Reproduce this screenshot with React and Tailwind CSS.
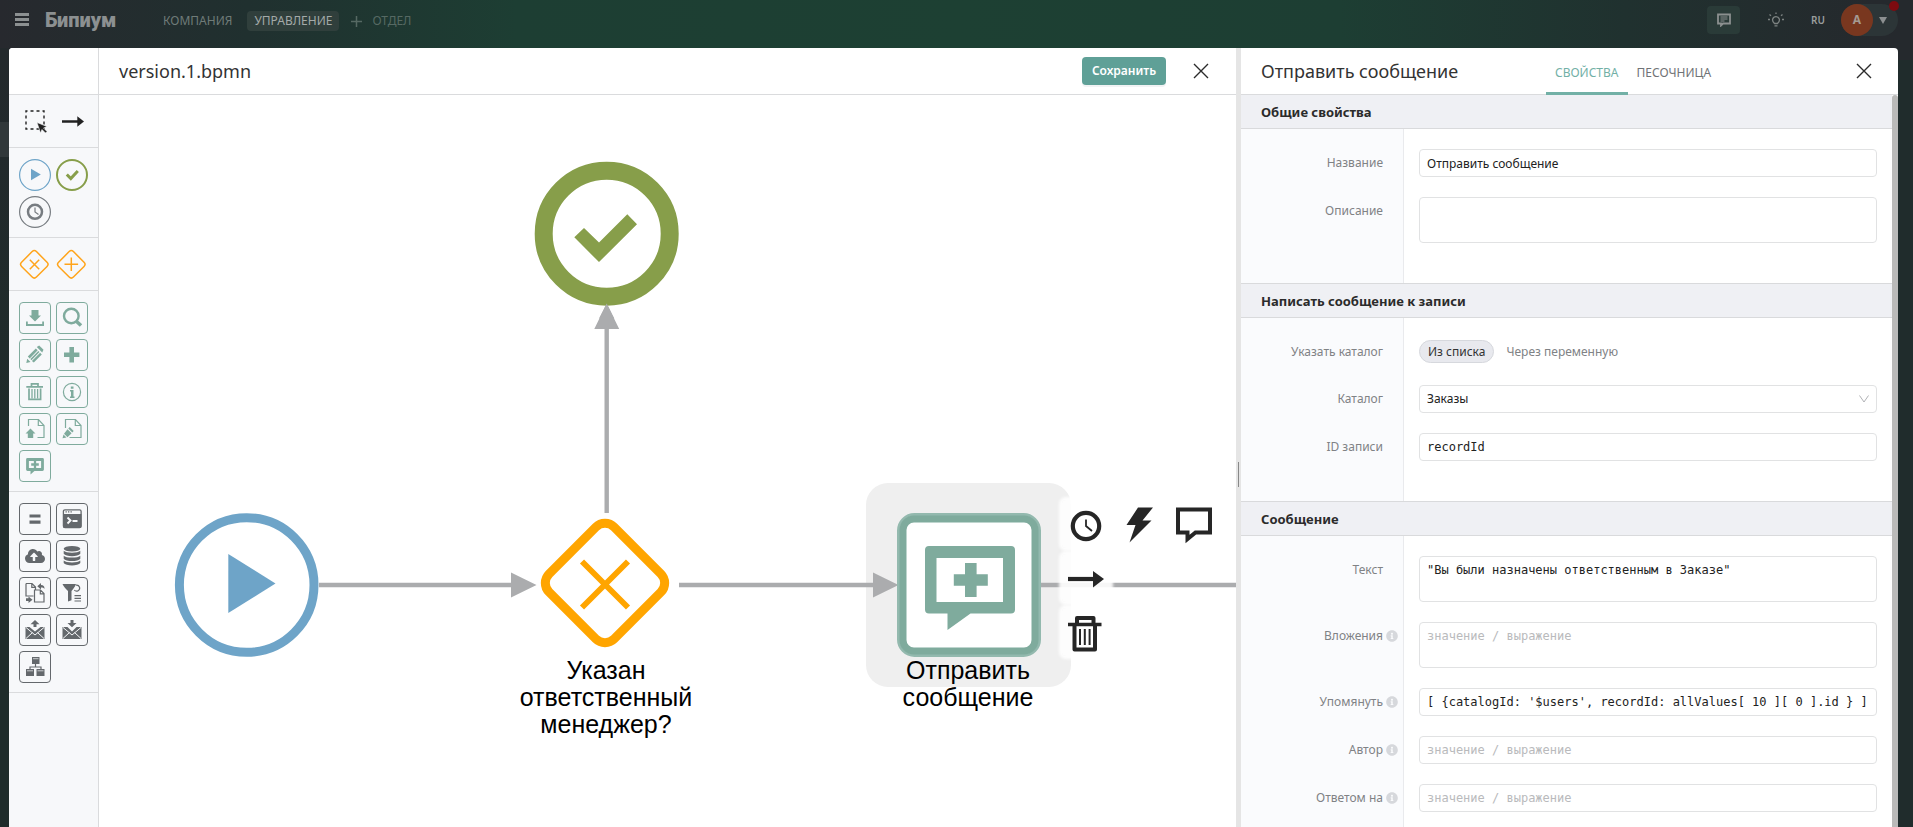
import { FaCloudUploadAlt, FaInfoCircle } from "react-icons/fa";

const Icon = ({ children }) => (
  <svg viewBox="0 0 32 32" className="size-8 shrink-0" fill="none" stroke="currentColor" aria-hidden="true">
    {children}
  </svg>
);
const Solid = ({ children }) => (
  <g fill="currentColor" stroke="none">{children}</g>
);

const icons = {
  lasso: (
    <Icon>
      <rect x="7" y="5" width="18" height="18" strokeWidth="1.4" strokeDasharray="3 3" strokeDashoffset="1.5" />
      <path d="M18 16.500 28 20.500 24.500 22 28 25.500 26.500 27 23 23.500 21.500 27Z" fill="currentColor" stroke="#f7f8fa" strokeWidth=".6" />
    </Icon>
  ),
  connect: (
    <Icon>
      <path d="M6 15.500H22" strokeWidth="2.4" />
      <Solid><path d="M21.300 10.300 28 15.500 21.300 20.700Z" /></Solid>
    </Icon>
  ),
  start: (
    <Icon>
      <circle cx="16" cy="16" r="15.400" strokeWidth="1.200" />
      <Solid><path d="M12 9.700V21.200L21.800 15.500Z" /></Solid>
    </Icon>
  ),
  end: (
    <Icon>
      <circle cx="16" cy="16" r="15" strokeWidth="2" />
      <path d="m10.800 15.500 4 4 7-7.500" strokeWidth="3" />
    </Icon>
  ),
  timer: (
    <Icon>
      <circle cx="16" cy="16" r="15.400" strokeWidth="1.200" />
      <circle cx="16" cy="15.800" r="7" strokeWidth="2.500" />
      <path d="M16 11.500V16l3.500 2.500" strokeWidth="1.200" />
    </Icon>
  ),
  gatewayX: (
    <Icon>
      <rect x="4.800" y="4.800" width="21" height="21" rx="3" strokeWidth="1.500" transform="rotate(45 15.300 15.300)" />
      <path d="m10.800 10.800 9.400 9.400m0-9.400-9.400 9.400" strokeWidth="1.500" />
    </Icon>
  ),
  gatewayPlus: (
    <Icon>
      <rect x="4.800" y="4.800" width="21" height="21" rx="3" strokeWidth="1.500" transform="rotate(45 15.300 15.300)" />
      <path d="M8.500 15.300h13.600M15.300 8.500v13.600" strokeWidth="1.500" />
    </Icon>
  ),
  download: (
    <Icon>
      <Solid>
        <path d="M12.500 8h7v5.500h2.500L16 19.500 10 13.500h2.500ZM7 19.500h1.800V22h14.400v-2.500H25V24H7Z" />
      </Solid>
    </Icon>
  ),
  search: (
    <Icon>
      <circle cx="15.300" cy="14" r="7.300" strokeWidth="2.400" />
      <path d="m20 19 5 4.500" strokeWidth="3.600" />
    </Icon>
  ),
  pencil: (
    <Icon>
      <Solid>
        <path d="m17.800 8 2.400-1.500 4.300 4.300-1.300 2.600Z" />
        <path d="m7.300 24 .900-4.200 3.300 3.300ZM8.800 17.600l8-8.200 1.900 1.900-8 8.200ZM11.300 20.100l8-8.200 1.200 1.200-8 8.200ZM12.900 22l8.200-8.200 1.700 1.700-8 8.100Z" />
      </Solid>
    </Icon>
  ),
  plus: (
    <Icon>
      <path d="M8 15.800h15.400M15.700 8.100v15.400" strokeWidth="4.600" />
    </Icon>
  ),
  trash: (
    <Icon>
      <path d="M7.300 10.800H24M12.500 10.500V7.800h6.500v2.700" strokeWidth="1.700" />
      <path d="M10 12.500V23.300h11.600V12.500" strokeWidth="1.700" />
      <path d="M13 13v9.500M15.800 13v9.500M18.600 13v9.500" strokeWidth="1.300" />
    </Icon>
  ),
  info: (
    <Icon>
      <circle cx="16" cy="16" r="8.600" strokeWidth="1.200" />
      <Solid><path d="M14.800 10.500h2.700v2.300h-2.700ZM14 14h3.500v6.500h1V22H14v-1.500h1v-5h-1Z" /></Solid>
    </Icon>
  ),
  docUp: (
    <Icon>
      <path d="M9.500 13V6.500h10l5.500 6v12H18.500M19.300 6.500V12.500H25" strokeWidth="1.200" />
      <Solid><path d="m11.500 15.500 5 5h-2.300V25H8.800v-4.500H6.500Z" /></Solid>
    </Icon>
  ),
  docEdit: (
    <Icon>
      <path d="M9.500 15V6.500h10l5.500 6v12H13.500M19.300 6.500V12.500H25" strokeWidth="1.200" />
      <Solid><path d="m13.700 14 4 4-1.400 1.500-4-4ZM11.500 16.200l4.100 4.100-4.100 3.900-3.500-3.500ZM7.500 21.500l3 3-4 .7Z" /></Solid>
    </Icon>
  ),
  comment: (
    <Icon>
      <path d="M8.500 9.500h15v10h-15Z" strokeWidth="2.800" strokeLinejoin="round" />
      <path d="M12.200 14.500h7.600M16 10.700v7.600" strokeWidth="2.300" />
      <Solid><path d="M11.500 20.500V24.500l4.500-4Z" /></Solid>
    </Icon>
  ),
  assign: (
    <Icon>
      <path d="M10.500 13h11M10.500 19.200h11" strokeWidth="3.200" />
    </Icon>
  ),
  terminal: (
    <Icon>
      <rect x="7.400" y="6.800" width="17.700" height="17.700" rx="1.500" strokeWidth="1.300" />
      <Solid><path d="M7 11h18.500v12.500a1.500 1.500 0 0 1-1.500 1.500H8.500A1.500 1.500 0 0 1 7 23.500ZM9.500 8.300h1.300v1.300H9.500ZM12 8.300h1.300v1.300H12ZM14.500 8.300h1.300v1.300h-1.300Z" /></Solid>
      <path d="m11.500 14.500 3 3-3 3M16.500 18h5" stroke="#f7f8fa" strokeWidth="1.900" />
    </Icon>
  ),
  cloud: <FaCloudUploadAlt className="size-5 shrink-0" aria-hidden="true" />,
  database: (
    <Icon>
      <Solid>
        <ellipse cx="16" cy="8.800" rx="8.300" ry="2.800" />
        <path d="M7.700 10.800c2 2.500 14.600 2.500 16.600 0v3c-2 3.100-14.600 3.100-16.600 0ZM7.700 15.700c2 2.500 14.600 2.500 16.600 0v3c-2 3.100-14.600 3.100-16.600 0ZM7.700 20.600c2 2.500 14.600 2.500 16.600 0v2.400c-2 3.300-14.600 3.300-16.600 0Z" />
      </Solid>
    </Icon>
  ),
  docCopy: (
    <Icon>
      <path d="M7 6.500h6l3.500 3.500v3M7 6.500V19h7.500M12.800 6.500V10.300h3.700M15.500 13h6l3.500 3.500v8.500h-9.500ZM21.300 13v3.800H25" strokeWidth="1.200" />
      <Solid>
        <path d="M22 6v2c2.500 0 3.500 1 3.500 4-.800-1.300-1.800-1.500-3.500-1.500v2L18.300 9.200ZM7 21.300h2.500v-1.800l4 3.200-4 3.200v-1.800H7Z" />
      </Solid>
    </Icon>
  ),
  filter: (
    <Icon>
      <Solid><path d="M6.500 7H20l-.800 2c-1.200 2-2 3-3.700 5v9.300L12 24.500V14C9.500 11.500 7.500 9.500 6.500 7Z" /></Solid>
      <path d="M20 8.200a3 3 0 1 1-1.700 4.800M18.500 18.700H25M18.500 21.300H25M18.500 24H25" strokeWidth="1.200" />
    </Icon>
  ),
  mailUp: (
    <Icon>
      <Solid><path d="m16 6 4.500 4.300h-3V13h-3v-2.700h-3ZM6.500 13h4L16 17.500 21.500 13h4v12h-19Z" /></Solid>
      <path d="m7 13.500 9 7.500 9-7.500M7 24.500l6.500-6M25 24.500l-6.500-6" stroke="#f7f8fa" strokeWidth="1" />
    </Icon>
  ),
  mailDown: (
    <Icon>
      <Solid><path d="m16 13.300 4.500-4.300h-3V6h-3v3h-3ZM6.500 13h5L16 17.500 20.500 13h5v12h-19Z" /></Solid>
      <path d="m7 13.500 9 7.500 9-7.500M7 24.500l6.500-6M25 24.500l-6.500-6" stroke="#f7f8fa" strokeWidth="1" />
    </Icon>
  ),
  sitemap: (
    <Icon>
      <path d="M16.500 13v3M11 18.500V16h11v2.500" strokeWidth="1.200" />
      <Solid><path d="M13 6h7.500v7H13ZM7 18h8v7H7ZM17.500 18h8v7h-8Z" /></Solid>
      <path d="M14 7.700h5.500M8 19.800h6M18.500 19.800h6" stroke="#f7f8fa" strokeWidth=".7" />
    </Icon>
  ),
};

const GREEN_BOX = "rounded border border-[#7fab9d] text-[#7fab9d]";
const GREY_BOX = "rounded border border-[#64686c] text-[#64686c]";

const palette = [
  [
    ["lasso", "Выделение", "text-[#222]"],
    ["connect", "Соединение", "text-[#222]"],
  ],
  [
    ["start", "Начало", "text-[#6ea4c8]"],
    ["end", "Завершение", "text-[#879e4a]"],
    ["timer", "Таймер", "text-[#777c81]"],
  ],
  [
    ["gatewayX", "Исключающий шлюз", "text-[#ffa41b]"],
    ["gatewayPlus", "Параллельный шлюз", "text-[#ffa41b]"],
  ],
  [
    ["download", "Получить запись", GREEN_BOX],
    ["search", "Найти записи", GREEN_BOX],
    ["pencil", "Изменить запись", GREEN_BOX],
    ["plus", "Создать запись", GREEN_BOX],
    ["trash", "Удалить запись", GREEN_BOX],
    ["info", "Информация", GREEN_BOX],
    ["docUp", "Загрузить файл", GREEN_BOX],
    ["docEdit", "Заполнить файл", GREEN_BOX],
    ["comment", "Написать сообщение", GREEN_BOX],
  ],
  [
    ["assign", "Присвоить", GREY_BOX],
    ["terminal", "Код", GREY_BOX],
    ["cloud", "Запрос", GREY_BOX],
    ["database", "База данных", GREY_BOX],
    ["docCopy", "Преобразовать файл", GREY_BOX],
    ["filter", "Фильтр", GREY_BOX],
    ["mailUp", "Отправить письмо", GREY_BOX],
    ["mailDown", "Получить письмо", GREY_BOX],
    ["sitemap", "Подпроцесс", GREY_BOX],
  ],
];

function Palette() {
  return (
    <aside className="flex w-[90px] shrink-0 flex-col border-r border-[#dadbdd] bg-[#f7f8fa]">
      <div className="h-[47px] shrink-0 border-b border-[#dadbdd] bg-white" />
      {palette.map((group, i) => (
        <div key={i} className="grid shrink-0 grid-cols-[32px_32px] gap-[5px] border-b border-[#dadbdd] pt-[11px] pb-[9px] pl-[10px]">
          {group.map(([icon, label, tone]) => (
            <button key={icon} type="button" aria-label={label} className={`flex size-8 items-center justify-center ${tone}`}>
              {icons[icon]}
            </button>
          ))}
        </div>
      ))}
    </aside>
  );
}

const CloseIcon = () => (
  <svg viewBox="0 0 16 16" className="size-4" stroke="#2b2b2b" strokeWidth="1.400" aria-hidden="true">
    <path d="m1 1 14 14M15 1 1 15" />
  </svg>
);

const padButtons = [
  {
    label: "Таймер",
    place: "left-[963px] top-[405px]",
    art: (
      <>
        <circle cx="24" cy="26" r="13.200" fill="none" stroke="#262626" strokeWidth="4.200" />
        <path d="M24 19.500v6.500l6 5" fill="none" stroke="#262626" strokeWidth="1.800" />
      </>
    ),
  },
  {
    label: "Событие",
    place: "left-[1016px] top-[405px]",
    art: <path d="M23 7.500h15L27.500 20.500h9L14.500 42.500 20.500 25H11.500Z" fill="#262626" />,
  },
  {
    label: "Комментарий",
    place: "left-[1069px] top-[405px]",
    art: <path d="M10 9.500h32v23H27.500l-8 6.500v-6.500H10Z" fill="none" stroke="#262626" strokeWidth="4" />,
  },
  {
    label: "Соединить",
    place: "left-[963px] top-[459px]",
    art: (
      <>
        <path d="M6 25h26" stroke="#262626" strokeWidth="4.200" />
        <path d="M31 17l11 8-11 8.500Z" fill="#262626" />
      </>
    ),
  },
  {
    label: "Удалить",
    place: "left-[963px] top-[513px]",
    art: (
      <>
        <path d="M15 15.500V10h16.500v5.500" fill="none" stroke="#262626" strokeWidth="4" strokeLinejoin="round" />
        <path d="M6 16.500h33.500" stroke="#262626" strokeWidth="3.600" />
        <path d="M12.500 17v24.500H33V17" fill="none" stroke="#262626" strokeWidth="4" strokeLinejoin="round" />
        <path d="M18 21v16M22.800 21v16M27.600 21v16" stroke="#262626" strokeWidth="2" />
      </>
    ),
  },
];

function Diagram() {
  return (
    <div className="relative min-h-0 flex-1 overflow-hidden">
      <svg className="absolute inset-0 size-full" role="img" aria-label="Схема процесса">
        <g transform="translate(-99 -95)">
          <rect x="866" y="483" width="205" height="204" rx="22" fill="#efefef" />
          <g stroke="#abacae" strokeWidth="4.400">
            <path d="M319 585H512M606.700 513V328M679 585H874M1041 585H1500" />
          </g>
          <g fill="#abacae">
            <path d="M511 572.500 536.500 585 511 597.500ZM594.300 329 606.700 303.500 619.200 329ZM873 572.500 898.500 585 873 597.500Z" />
          </g>

          <circle cx="246.700" cy="585" r="67.300" fill="#fff" stroke="#6ea4c8" strokeWidth="9" />
          <path d="M228.300 554V613L275.500 583.500Z" fill="#6ea4c8" />

          <circle cx="606.700" cy="233.700" r="63" fill="#fff" stroke="#879e4a" strokeWidth="18" />
          <path d="M574.300 237.300 584 228 599 242.600 627.300 214.300 637 224.200 599 262.100Z" fill="#879e4a" />
          <path d="M599 318.500 606.700 303.500 614.300 318.500Z" fill="#abacae" />

          <rect x="559" y="537" width="92" height="92" rx="13" fill="#fff" stroke="#ffa500" strokeWidth="9" transform="rotate(45 605 583)" />
          <path d="m582 561.500 46 46m0-46-46 46" stroke="#ffa500" strokeWidth="5.800" />

          <rect x="898.500" y="514.500" width="141" height="141" rx="16" fill="#fff" stroke="#93b9ae" strokeWidth="3" />
          <rect x="903" y="519" width="132" height="132" rx="11" fill="#fff" stroke="#7fab9d" strokeWidth="7" />
          <path d="M929 546h82a4 4 0 0 1 4 4v59.500a4 4 0 0 1-4 4H970.500L947.500 630V613.500H929a4 4 0 0 1-4-4V550a4 4 0 0 1 4-4Z" fill="#7fab9d" />
          <path d="M936.500 558h66.500v44h-66.500Z" fill="#fff" />
          <path d="M965 563h11.600v11.300h11.200v11.500h-11.200V597H965v-11.200h-11.200v-11.500H965Z" fill="#7fab9d" />
        </g>
      </svg>
      <p className="absolute top-[562px] left-[407px] w-[200px] text-center font-['Liberation_Sans',Arial,sans-serif] text-[25px] leading-[27px] text-black">
        Указан ответственный менеджер?
      </p>
      <p className="absolute top-[562px] left-[789px] w-[160px] text-center font-['Liberation_Sans',Arial,sans-serif] text-[25px] leading-[27px] text-black">
        Отправить сообщение
      </p>
      {padButtons.map(({ label, place, art }) => (
        <button key={label} type="button" aria-label={label} className={`absolute ${place} size-12 rounded bg-white/90 shadow-[0_0_3px_3px_rgba(255,255,255,0.9)]`}>
          <svg viewBox="0 0 48 48" className="size-12 overflow-visible" aria-hidden="true">{art}</svg>
        </button>
      ))}
    </div>
  );
}

function Row({ label, htmlFor, hint, children }) {
  return (
    <div className="group flex">
      <div className="w-[163px] shrink-0 border-r border-[#e9eaed] bg-[#fafbfd] pb-5 group-first:pt-5 group-last:pb-10">
        <div className="flex h-[27px] items-center justify-end gap-[3px] pr-[5px] text-[12px] text-[#808285]">
          <label htmlFor={htmlFor}>{label}</label>
          <span className="flex w-3 justify-center text-[#d6d8dc]">
            {hint && <FaInfoCircle className="size-3" aria-hidden="true" />}
          </span>
        </div>
      </div>
      <div className="min-w-0 flex-1 pr-[15px] pb-5 pl-[15px] group-first:pt-5 group-last:pb-10">{children}</div>
    </div>
  );
}

const FIELD = "block w-full rounded border border-[#e1e2e3] bg-white px-[7px] text-[12px] text-[#222] outline-none placeholder:text-[#b9babc]";
const CODE = "font-['DejaVu_Sans_Mono',monospace]";

function Section({ title, first, children }) {
  return (
    <section>
      <h3 className={`flex items-center border-b border-[#d9dadc] bg-[#eff0f4] pt-0.5 pl-5 text-[13px] font-bold text-[#2b2b2b] ${first ? "h-[34px]" : "h-[35px] border-t"}`}>
        {title}
      </h3>
      <div>{children}</div>
    </section>
  );
}

function Properties() {
  return (
    <aside className="flex w-[657px] shrink-0 flex-col">
      <header className="flex h-[47px] shrink-0 items-stretch border-b border-[#dadbdd] pl-5">
        <h2 className="flex w-[285px] items-center text-[18px] text-[#333]">Отправить сообщение</h2>
        <nav className="-mb-px flex text-[12px]">
          <button type="button" className="border-b-[3px] border-[#72b0a6] px-[9px] pt-[6px] text-[#72b0a6]">СВОЙСТВА</button>
          <button type="button" className="border-b-[3px] border-transparent px-[9px] pt-[6px] text-[#707376]">ПЕСОЧНИЦА</button>
        </nav>
        <button type="button" aria-label="Закрыть" className="mr-[26px] ml-auto self-center">
          <CloseIcon />
        </button>
      </header>
      <div className="flex min-h-0 flex-1">
        <form className="min-w-0 flex-1 overflow-hidden">
          <Section title="Общие свойства" first>
            <Row label="Название" htmlFor="name">
              <input id="name" defaultValue="Отправить сообщение" className={`${FIELD} h-7`} />
            </Row>
            <Row label="Описание" htmlFor="about">
              <textarea id="about" className={`${FIELD} h-[46px] resize-none`} />
            </Row>
          </Section>
          <Section title="Написать сообщение к записи">
            <Row label="Указать каталог" htmlFor="from-list">
              <div className="flex h-[27px] items-center gap-3 text-[12px]">
                <label className="flex h-[23px] cursor-pointer items-center rounded-full border border-[#d6d8dd] bg-[#e8e9ee] px-2 text-[#333]">
                  <input id="from-list" type="radio" name="catalog-source" defaultChecked className="sr-only" />
                  Из списка
                </label>
                <label className="cursor-pointer text-[#808285]">
                  <input type="radio" name="catalog-source" className="sr-only" />
                  Через переменную
                </label>
              </div>
            </Row>
            <Row label="Каталог" htmlFor="catalog">
              <div className="relative">
                <select id="catalog" className={`${FIELD} h-7 appearance-none`}>
                  <option>Заказы</option>
                </select>
                <svg viewBox="0 0 12 8" className="pointer-events-none absolute top-[10px] right-[7px] h-2 w-3" fill="none" stroke="#b0b2b5" aria-hidden="true">
                  <path d="m1.500.5 4.500 6.500L10.500.5" />
                </svg>
              </div>
            </Row>
            <Row label="ID записи" htmlFor="record">
              <input id="record" defaultValue="recordId" className={`${FIELD} ${CODE} h-7`} />
            </Row>
          </Section>
          <Section title="Сообщение">
            <Row label="Текст" htmlFor="text">
              <textarea id="text" defaultValue={'"Вы были назначены ответственным в Заказе"'} className={`${FIELD} ${CODE} h-[46px] resize-none pt-1`} />
            </Row>
            <Row label="Вложения" htmlFor="files" hint>
              <textarea id="files" placeholder="значение / выражение" className={`${FIELD} ${CODE} h-[46px] resize-none pt-1`} />
            </Row>
            <Row label="Упомянуть" htmlFor="mention" hint>
              <input id="mention" defaultValue="[ {catalogId: '$users', recordId: allValues[ 10 ][ 0 ].id } ]" className={`${FIELD} ${CODE} h-7`} />
            </Row>
            <Row label="Автор" htmlFor="author" hint>
              <input id="author" placeholder="значение / выражение" className={`${FIELD} ${CODE} h-7`} />
            </Row>
            <Row label="Ответом на" htmlFor="reply" hint>
              <input id="reply" placeholder="значение / выражение" className={`${FIELD} ${CODE} h-7`} />
            </Row>
          </Section>
        </form>
        <div className="w-1.5 shrink-0 rounded-t bg-[#babab9]" />
      </div>
    </aside>
  );
}

function TopBar() {
  return (
    <header className="flex h-12 shrink-0 items-start pr-[15px] pl-[15px] text-[12px]">
      <button type="button" aria-label="Меню" className="mt-[13px]">
        <svg viewBox="0 0 14 13" className="h-[13px] w-[14px]" stroke="#8c9091" strokeWidth="3" aria-hidden="true">
          <path d="M0 1.500h14M0 6.500h14M0 11.500h14" />
        </svg>
      </button>
      <a href="#home" className="ml-[16px] w-[108px] font-['Roboto',sans-serif] text-[20px] leading-10 font-black text-[#8c9091]">Бипиум</a>
      <nav className="flex h-[42px] items-center">
        <a href="#company" className="ml-[10px] text-[#6f7b78]">КОМПАНИЯ</a>
        <a href="#management" className="ml-[15px] flex h-5 items-center rounded bg-[#303f3c] px-[7px] text-[#a3a9a8]">УПРАВЛЕНИЕ</a>
        <a href="#department" className="ml-3 flex items-center gap-[10px] text-[#566963]">
          <svg viewBox="0 0 11 11" className="size-[11px]" stroke="currentColor" strokeWidth="1.500" aria-hidden="true">
            <path d="M5.500 0v11M0 5.500h11" />
          </svg>
          ОТДЕЛ
        </a>
      </nav>
      <div className="ml-auto flex h-10 items-center">
        <button type="button" aria-label="Сообщения" className="flex h-7 w-[33px] items-center justify-center rounded bg-[#2a3b38]">
          <svg viewBox="0 0 16 14" className="h-[14px] w-4" fill="none" stroke="#8b908f" aria-hidden="true">
            <path d="M2 1.500h12v9H7L5 12.500v-2H2Z" strokeWidth="1.800" />
            <path d="M4.500 4h7M4.500 6h7M4.500 8h4" />
          </svg>
        </button>
        <button type="button" aria-label="Подсказки" className="ml-[28px]">
          <svg viewBox="0 0 16 16" className="size-4" fill="none" stroke="#7d8382" strokeWidth="1.300" aria-hidden="true">
            <path d="M6.500 11.500C4.500 9.500 4.200 8.500 4.700 7a3.500 3.500 0 0 1 6.600 0c.5 1.500.2 2.500-1.800 4.500ZM6.500 13.800h3M8 .5V2M1.500 2.500l1.500 1.300M14.500 2.500 13 3.800M0 7.500h2M14 7.500h2" />
          </svg>
        </button>
        <button type="button" className="ml-[27px] text-[10px] font-semibold text-[#9a9e9e]">RU</button>
        <button type="button" className="relative ml-[16px] flex h-8 w-[57px] items-center rounded-full bg-[#2c3537]">
          <span className="flex size-8 items-center justify-center rounded-full bg-[#79371f] font-bold text-[#a59a92]">А</span>
          <svg viewBox="0 0 8 7" className="ml-[6px] h-[7px] w-2" fill="#8c9091" aria-hidden="true">
            <path d="M0 0h8L4 7Z" />
          </svg>
          <span className="absolute -top-[3px] -right-px size-[10px] rounded-full bg-[#7d0b10]" />
        </button>
      </div>
    </header>
  );
}

export default function App() {
  return (
    <div className="flex h-screen flex-col overflow-hidden bg-[#202c2c] bg-[linear-gradient(90deg,#27292e_0%,#20302f_13%,#1d3e33_27%,#1d4033_50%,#1d3e33_70%,#20312f_85%,#25292d_98%)] bg-[length:100%_60px] bg-no-repeat font-['Noto_Sans',Tahoma,sans-serif]">
      <TopBar />
      <div className="flex min-h-0 flex-1 pr-[15px]">
        <div className="w-[9px] shrink-0 bg-linear-to-b from-[#23292c] to-[#1f2c2b] to-50% pt-[74px]">
          <div className="h-[35px] bg-[#31383a]" />
        </div>
        <main className="flex min-w-0 flex-1 overflow-hidden rounded-t bg-white">
          <Palette />
          <div className="flex min-w-0 flex-1 flex-col">
            <header className="flex h-[47px] shrink-0 items-center border-b border-[#dadbdd] pr-[27px] pl-5">
              <h1 className="text-[18px] text-[#333]">version.1.bpmn</h1>
              <button type="button" className="ml-auto h-7 w-[84px] rounded bg-[#5fa097] text-[12px] font-semibold text-white shadow-[0_2px_0_#f1f3f4]">Сохранить</button>
              <button type="button" aria-label="Закрыть схему" className="ml-[27px]">
                <CloseIcon />
              </button>
            </header>
            <Diagram />
          </div>
          <div className="flex w-[5px] shrink-0 cursor-col-resize items-center justify-center bg-[#e5e5e5] pt-[74px]">
            <div className="h-[25px] w-px bg-[#888]" />
          </div>
          <Properties />
        </main>
      </div>
    </div>
  );
}
